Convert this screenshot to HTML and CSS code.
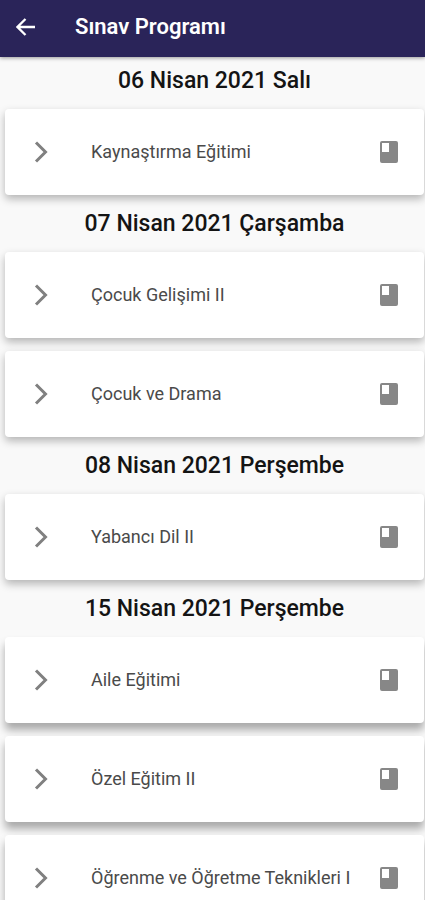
FILE: index.html
```html
<!DOCTYPE html>
<html lang="tr">
<head>
<meta charset="utf-8">
<meta name="viewport" content="width=device-width, initial-scale=1">
<title>Sınav Programı</title>
<link rel="stylesheet" href="styles.css">
</head>
<body>
<svg width="0" height="0" class="sprite" aria-hidden="true">
  <symbol id="chevron" viewBox="0 0 14 22"><path d="M2 1.5 11.5 11 2 20.5" fill="none" stroke="currentColor" stroke-width="3"/></symbol>
  <symbol id="book" viewBox="0 0 18 22"><path fill-rule="evenodd" fill="currentColor" d="M2 0H16a2 2 0 0 1 2 2V20a2 2 0 0 1-2 2H2a2 2 0 0 1-2-2V2a2 2 0 0 1 2-2ZM2 2V11H9V2Z"/></symbol>
</svg>
<header class="app-bar">
  <button class="back" type="button" aria-label="Geri">
    <svg width="20" height="18" viewBox="0 0 20 18"><path d="M19 9H2M9.500 1 1.500 9l8 8" fill="none" stroke="currentColor" stroke-width="2.300"/></svg>
  </button>
  <h1 class="title">Sınav Programı</h1>
</header>
<main class="schedule">
  <section class="day">
    <h2 class="date">06 Nisan 2021 Salı</h2>
    <ul class="exams">
      <li><a class="card" href="#"><svg class="chevron"><use href="#chevron"/></svg><span class="name">Kaynaştırma Eğitimi</span><svg class="book"><use href="#book"/></svg></a></li>
    </ul>
  </section>
  <section class="day">
    <h2 class="date">07 Nisan 2021 Çarşamba</h2>
    <ul class="exams">
      <li><a class="card" href="#"><svg class="chevron"><use href="#chevron"/></svg><span class="name">Çocuk Gelişimi II</span><svg class="book"><use href="#book"/></svg></a></li>
      <li><a class="card" href="#"><svg class="chevron"><use href="#chevron"/></svg><span class="name">Çocuk ve Drama</span><svg class="book"><use href="#book"/></svg></a></li>
    </ul>
  </section>
  <section class="day">
    <h2 class="date">08 Nisan 2021 Perşembe</h2>
    <ul class="exams">
      <li><a class="card" href="#"><svg class="chevron"><use href="#chevron"/></svg><span class="name">Yabancı Dil II</span><svg class="book"><use href="#book"/></svg></a></li>
    </ul>
  </section>
  <section class="day day-late">
    <h2 class="date">15 Nisan 2021 Perşembe</h2>
    <ul class="exams">
      <li><a class="card" href="#"><svg class="chevron"><use href="#chevron"/></svg><span class="name">Aile Eğitimi</span><svg class="book"><use href="#book"/></svg></a></li>
      <li><a class="card" href="#"><svg class="chevron"><use href="#chevron"/></svg><span class="name">Özel Eğitim II</span><svg class="book"><use href="#book"/></svg></a></li>
      <li><a class="card" href="#"><svg class="chevron"><use href="#chevron"/></svg><span class="name">Öğrenme ve Öğretme Teknikleri I</span><svg class="book"><use href="#book"/></svg></a></li>
    </ul>
  </section>
</main>
</body>
</html>
```
FILE: styles.css
```css
* {
  box-sizing: border-box;
}

body {
  margin: 0;
  background: #f9f9f9;
  color: #141414;
  font-family: Roboto, "Liberation Sans", sans-serif;
}

body::-webkit-scrollbar {
  display: none;
}

.sprite {
  display: block;
}

.app-bar {
  display: flex;
  align-items: center;
  gap: 31px;
  height: 57px;
  padding: 0 8px 3px;
  background: #2a2459;
  color: #fff;
  box-shadow: 0 1px 4px rgba(0, 0, 0, 0.4);
}

.back {
  display: grid;
  place-items: center;
  width: 36px;
  height: 40px;
  padding: 0;
  border: 0;
  background: none;
  color: inherit;
}

.title {
  margin: 0;
  font-size: 22px;
  font-weight: 600;
  line-height: 28px;
}

.day + .day {
  margin-top: 5px;
}

.date {
  margin: 0;
  padding: 10px 0 15px 4px;
  font-size: 23px;
  font-weight: 500;
  line-height: 27px;
  text-align: center;
}

.exams {
  display: grid;
  gap: 13px;
  margin: 0;
  padding: 0 1px 0 5px;
  list-style: none;
}

.card {
  display: flex;
  align-items: center;
  height: 86px;
  padding: 0 26px 0 29px;
  border-radius: 4px;
  background: #fff;
  color: #4a4a4a;
  text-decoration: none;
  box-shadow: 0 4px 9px rgba(0, 0, 0, 0.28);
}

.day-late .card {
  box-shadow: 0 7px 9px rgba(0, 0, 0, 0.32);
}

.chevron {
  width: 14px;
  height: 22px;
  margin-right: 43px;
  color: #808080;
}

.name {
  flex: 1;
  font-size: 18px;
  line-height: 24px;
}

.book {
  width: 18px;
  height: 22px;
  color: #878787;
}
```
